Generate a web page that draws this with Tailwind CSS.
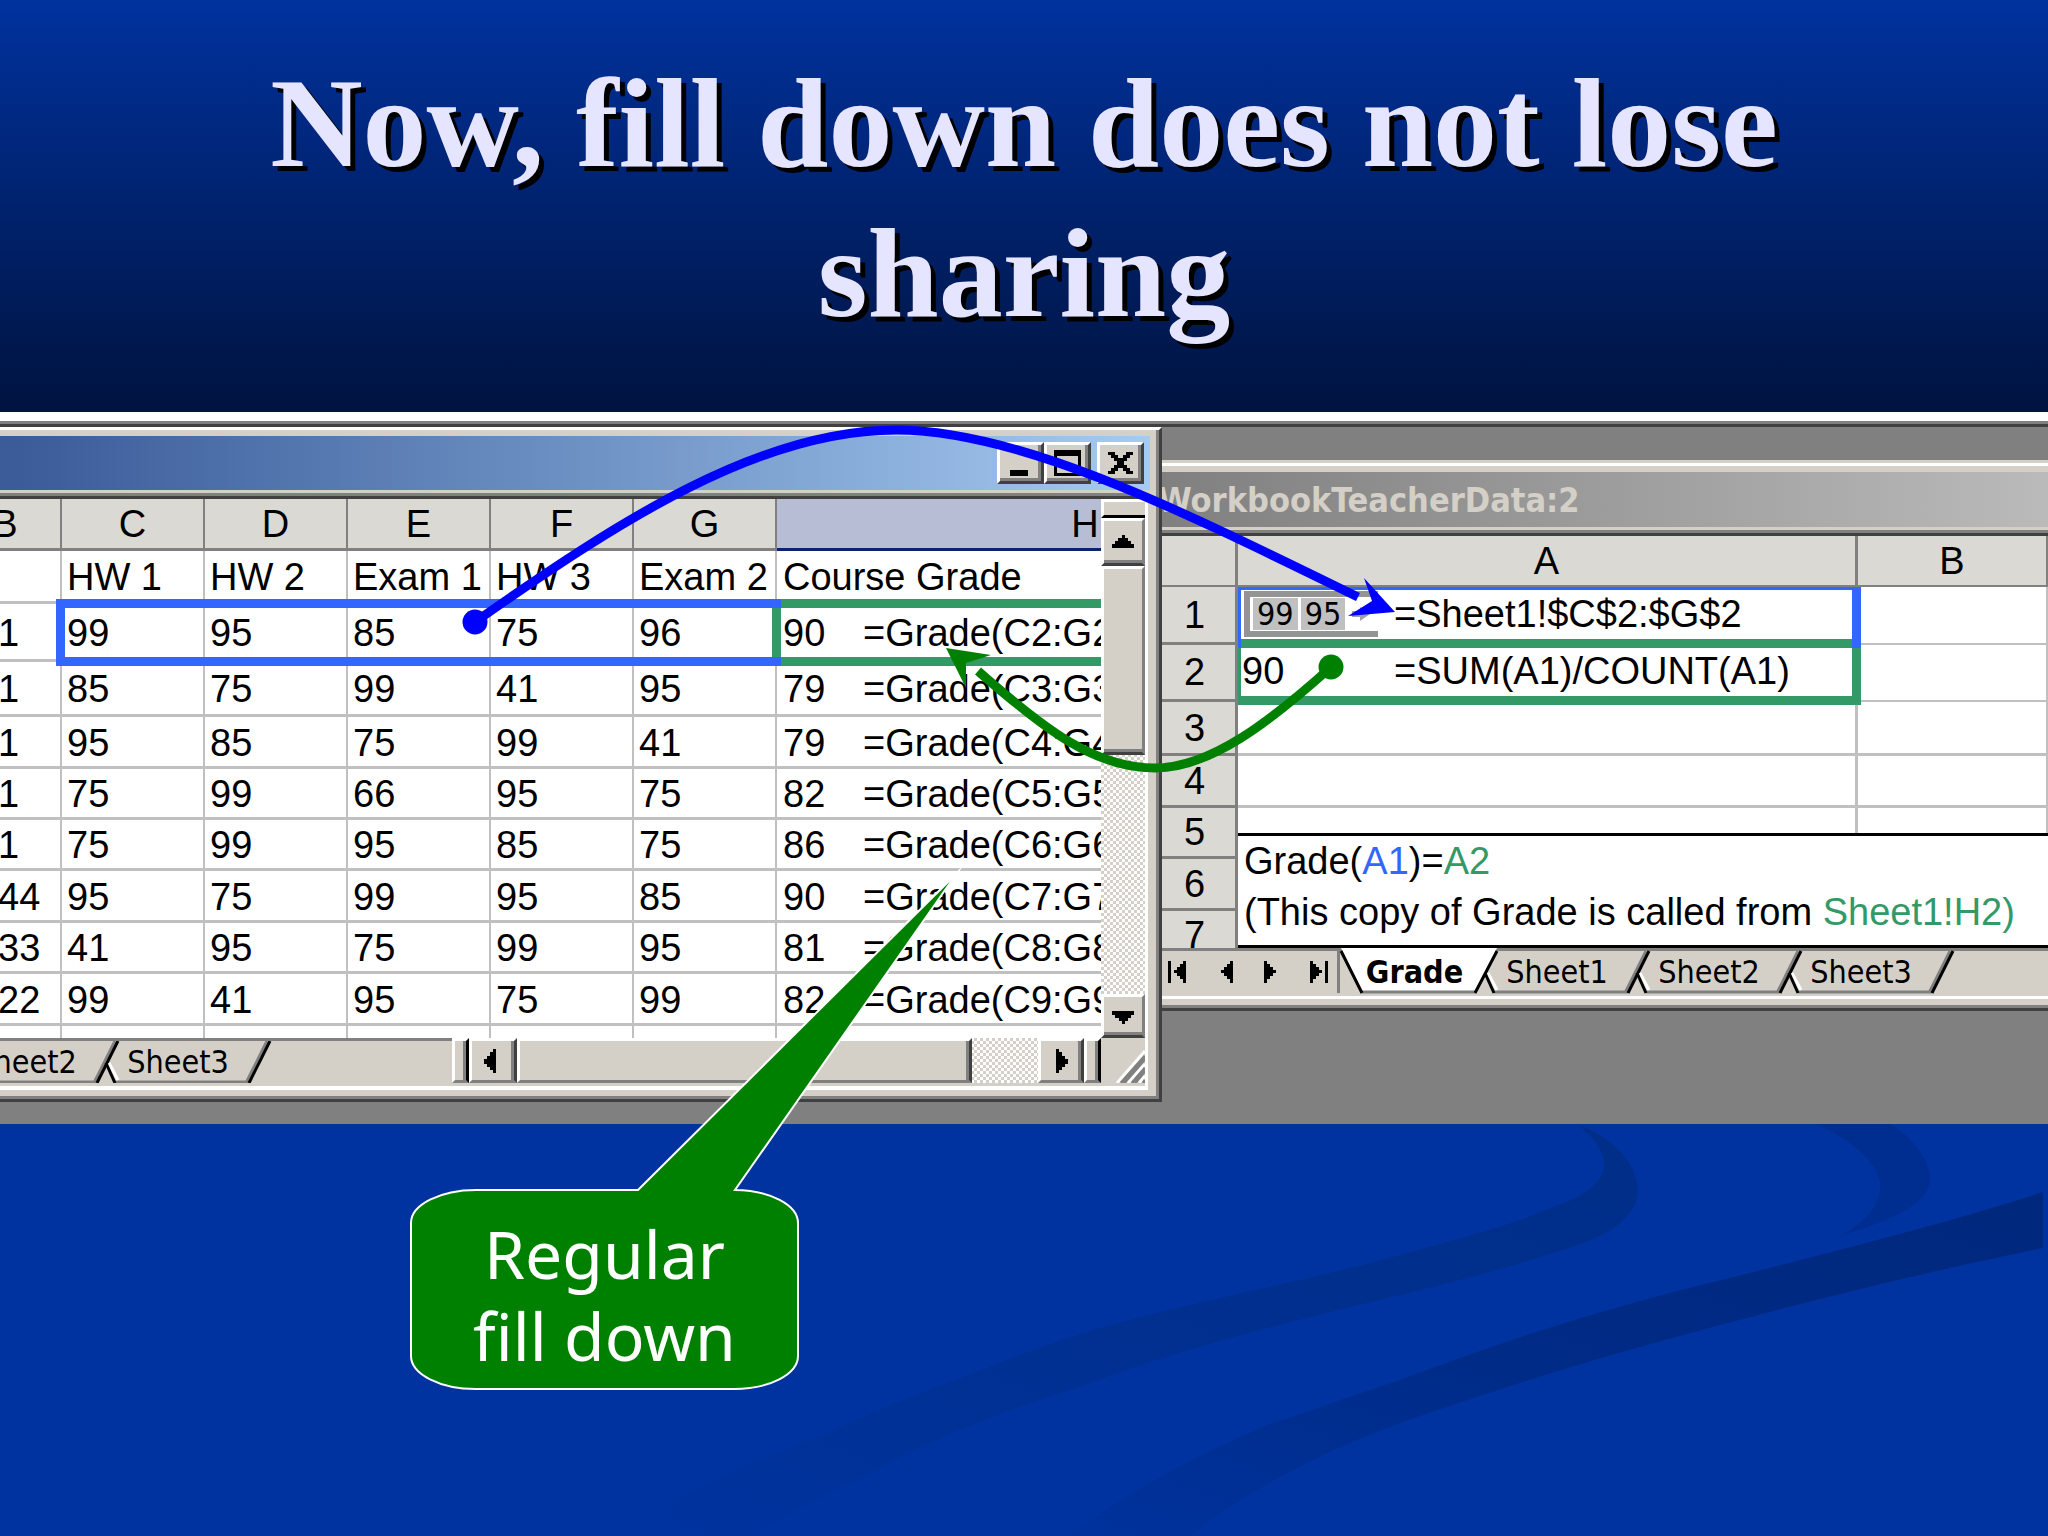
<!DOCTYPE html>
<html lang="en">

<head>
    <meta charset="UTF-8">
    <meta name="viewport" content="width=device-width, initial-scale=1.0">
    <title>Now, fill down does not lose sharing</title>
    <script src="https://cdn.jsdelivr.net/npm/@tailwindcss/browser@4"></script>
</head>

<body class="bg-[#0033a0]">
    <main class="relative min-h-screen overflow-hidden font-['Liberation_Sans',sans-serif] text-[38px] leading-none text-black">
        <!-- background swooshes -->
        <svg class="absolute inset-x-0 top-0 w-full" viewBox="0 0 2048 1536" aria-hidden="true">
            <defs>
                <linearGradient id="fade1" x1="1" y1="0" x2="0" y2="1">
                    <stop offset="0" stop-color="#002e88" />
                    <stop offset="0.6" stop-color="#003092" />
                    <stop offset="1" stop-color="#0033a0" />
                </linearGradient>
                <linearGradient id="fade2" x1="1" y1="0" x2="0" y2="1">
                    <stop offset="0" stop-color="#00287c" />
                    <stop offset="0.5" stop-color="#002b86" />
                    <stop offset="1" stop-color="#00329d" />
                </linearGradient>
            </defs>
            <path fill="url(#fade1)" d="M1577 1124C1614 1138 1638 1164 1638 1192C1636 1222 1600 1240 1550 1254C1500 1270 1450 1283 1400 1295C1290 1322 1180 1348 1085 1385C1000 1412 930 1440 875 1470C830 1492 790 1512 753 1536H625C680 1490 750 1463 819 1437C870 1412 925 1391 982 1370C1030 1350 1070 1337 1110 1325C1200 1300 1310 1280 1400 1255C1460 1238 1510 1226 1550 1208C1612 1188 1620 1158 1577 1124Z" />
            <path fill="#002e90" d="M1815 1124H1890C1912 1136 1930 1160 1930 1180C1928 1206 1890 1220 1840 1236C1866 1222 1880 1206 1880 1185C1880 1164 1850 1138 1815 1124Z" />
            <path fill="url(#fade2)" d="M2043 1192V1248C1900 1277 1770 1311 1640 1347C1550 1372 1480 1396 1400 1423C1330 1449 1260 1482 1190 1536H1070C1120 1496 1190 1458 1270 1424C1320 1408 1350 1396 1400 1380C1510 1338 1620 1304 1730 1278C1840 1250 1950 1222 2043 1192Z" />
        </svg>

        <header class="relative bg-linear-to-b from-[#00329f] to-[#001340] pt-12 pb-16">
            <h1 class="mx-auto max-w-[1700px] text-center font-['Liberation_Serif',serif] text-[128px] leading-[150px] font-bold text-[#e5e5ff] [text-shadow:5px_5px_0_#000]">
                Now, fill down does not lose sharing
            </h1>
        </header>

        <div class="relative border-t-9 border-white">
            <div class="h-[3px] bg-[#808080]"></div>
            <div class="h-[3px] bg-[#404040]"></div>
            <div class="grid grid-cols-[1162fr_886fr] items-start bg-[#808080] pb-[22px]">

                <!-- Sheet1 window -->
                <section class="min-w-0 border-t-3 border-r-3 border-b-3 border-t-white border-r-[#404040] border-b-[#404040]">
                    <div class="border-r-3 border-b-3 border-[#808080] bg-[#d4d0c8] py-[6px] pr-[6px]">
                        <div class="flex h-[54px] items-center justify-end bg-linear-to-r from-[#3a5a98] to-[#a6caf0] pr-[6px]">
                            <button aria-label="Minimize" class="flex h-[42px] w-[47px] items-center justify-center border-3 border-t-white border-r-[#404040] border-b-[#404040] border-l-white bg-[#d4d0c8] shadow-[inset_-3px_-3px_0_#808080]">
                                <svg class="h-8 w-8" viewBox="0 0 32 32"><path d="M5 23h18v6H5z" /></svg>
                            </button>
                            <button aria-label="Maximize" class="mr-[6px] flex h-[42px] w-[47px] items-center justify-center border-3 border-t-white border-r-[#404040] border-b-[#404040] border-l-white bg-[#d4d0c8] shadow-[inset_-3px_-3px_0_#808080]">
                                <svg class="h-8 w-8" viewBox="0 0 32 32"><path fill-rule="evenodd" d="M2 3h27v26H2zM5 9v17h21V9z" /></svg>
                            </button>
                            <button aria-label="Close" class="flex h-[42px] w-[47px] items-center justify-center border-3 border-t-white border-r-[#404040] border-b-[#404040] border-l-white bg-[#d4d0c8] shadow-[inset_-3px_-3px_0_#808080]">
                                <svg class="h-8 w-8" viewBox="0 0 32 32"><path d="M3 5h7v3h3v3h5V8h3V5h7v3h-3v3h-3v3h-3v4h3v3h3v3h3v3h-7v-3h-3v-3h-5v3h-3v3H3v-3h3v-3h3v-3h3v-4H9v-3H6V8H3z" /></svg>
                            </button>
                        </div>
                        <div class="mt-[3px] mr-[2px] border-t-3 border-r-3 border-b-4 border-t-[#808080] border-r-white border-b-white bg-[#d4d0c8] pb-[3px]">
                            <div class="flex border-t-3 border-[#404040]">
                                <div class="relative h-[539px] min-w-0 flex-1 overflow-hidden bg-white">
                                    <table class="-ml-[50px] w-[1445px] table-fixed border-separate border-spacing-0 text-left">
                                        <colgroup>
                                            <col class="w-[112px]">
                                            <col class="w-[143px]">
                                            <col class="w-[143px]">
                                            <col class="w-[143px]">
                                            <col class="w-[143px]">
                                            <col class="w-[143px]">
                                            <col>
                                        </colgroup>
                                        <thead>
                                            <tr class="h-[52px] text-center">
                                                <th class="border-r-2 border-b-3 border-[#808080] bg-[#dbd9d3] font-normal">B</th>
                                                <th class="border-r-2 border-b-3 border-[#808080] bg-[#dbd9d3] font-normal">C</th>
                                                <th class="border-r-2 border-b-3 border-[#808080] bg-[#dbd9d3] font-normal">D</th>
                                                <th class="border-r-2 border-b-3 border-[#808080] bg-[#dbd9d3] font-normal">E</th>
                                                <th class="border-r-2 border-b-3 border-[#808080] bg-[#dbd9d3] font-normal">F</th>
                                                <th class="border-r-2 border-b-3 border-[#808080] bg-[#dbd9d3] font-normal">G</th>
                                                <th class="border-r-2 border-b-3 border-[#0a246a] bg-[#b8bdd6] font-normal">H</th>
                                            </tr>
                                        </thead>
                                        <tbody id="grades"></tbody>
                                    </table>
                                    <div class="absolute top-[100px] right-0 left-[772px] h-[67px] border-y-9 border-l-9 border-[#339966]"></div>
                                    <div class="absolute top-[100px] left-[56px] h-[67px] w-[725px] border-y-9 border-l-9 border-[#3366ff]"></div>
                                </div>
                                <!-- vertical scroll bar -->
                                <div class="flex w-[44px] flex-col bg-[repeating-conic-gradient(#fff_0_25%,#d4d0c8_0_50%)] bg-[length:6px_6px]">
                                    <div class="h-[19px] border-t-3 border-b-3 border-l-3 border-t-white border-b-black border-l-white bg-[#d4d0c8]"></div>
                                    <button aria-label="Scroll up" class="flex h-[48px] items-center justify-center border-3 border-t-white border-r-[#808080] border-b-[#404040] border-l-white bg-[#d4d0c8] shadow-[inset_0_-3px_0_#808080]">
                                        <svg class="h-6 w-6" viewBox="0 0 24 24"><path d="M11 5h3v3h3v3h3v3h3v4H1v-4h3v-3h3V8h4z" /></svg>
                                    </button>
                                    <div class="h-[189px] border-3 border-t-white border-r-[#808080] border-b-[#404040] border-l-white bg-[#d4d0c8] shadow-[inset_0_-3px_0_#808080]"></div>
                                    <button aria-label="Scroll down" class="mt-auto flex h-[44px] items-center justify-center border-3 border-t-white border-r-[#808080] border-b-[#404040] border-l-white bg-[#d4d0c8] shadow-[inset_0_-3px_0_#808080]">
                                        <svg class="h-6 w-6" viewBox="0 0 24 24"><path d="M1 7h22v4h-3v3h-3v3h-3v3h-3v-3H8v-3H4v-3H1z" /></svg>
                                    </button>
                                </div>
                            </div>
                            <div class="flex h-[45px]">
                                <div class="w-[452px] overflow-hidden border-t-3 border-[#808080]">
                                    <div class="-ml-[34px] flex font-['DejaVu_Sans_Condensed','DejaVu_Sans',sans-serif] text-[32px]">
                                        <button class="relative h-[42px] w-[152px] pr-8">
                                            <svg class="absolute inset-0 h-full w-full overflow-visible" viewBox="0 0 152 42" fill="none"><path d="M-3 41H131" stroke="#808080" stroke-width="3" /><path d="M128 42l21-42" stroke="#808080" stroke-width="3" /><path d="M131 42L152 0" stroke="#000" stroke-width="3" /></svg>
                                            <span class="relative">Sheet2</span>
                                        </button>
                                        <button class="relative h-[42px] w-[152px] pr-8">
                                            <svg class="absolute inset-0 h-full w-full overflow-visible" viewBox="0 0 152 42" fill="none"><path d="M-3 41H131" stroke="#808080" stroke-width="3" /><path d="M-9 22l9 17" stroke="#fff" stroke-width="3" /><path d="M-12 22L-3 42" stroke="#000" stroke-width="3" /><path d="M128 42l21-42" stroke="#808080" stroke-width="3" /><path d="M131 42L152 0" stroke="#000" stroke-width="3" /></svg>
                                            <span class="relative">Sheet3</span>
                                        </button>
                                    </div>
                                </div>
                                <!-- horizontal scroll bar -->
                                <div class="flex min-w-0 flex-1 bg-[repeating-conic-gradient(#fff_0_25%,#d4d0c8_0_50%)] bg-[length:6px_6px]">
                                    <div class="w-[17px] border-3 border-t-white border-r-black border-b-[#808080] border-l-white bg-[#d4d0c8] shadow-[inset_-3px_0_0_#808080]"></div>
                                    <button aria-label="Scroll left" class="flex w-[48px] items-center justify-center border-3 border-t-white border-r-[#404040] border-b-[#808080] border-l-white bg-[#d4d0c8] shadow-[inset_-3px_0_0_#808080]">
                                        <svg class="h-6 w-6" viewBox="0 0 24 24"><path d="M15 0v24h-3v-3H9v-3H6v-3H3V10h3V7h3V3h3V0z" /></svg>
                                    </button>
                                    <div class="w-[455px] border-3 border-t-white border-r-[#404040] border-b-[#808080] border-l-white bg-[#d4d0c8] shadow-[inset_-3px_0_0_#808080]"></div>
                                    <button aria-label="Scroll right" class="ml-auto flex w-[46px] items-center justify-center border-3 border-t-white border-r-[#404040] border-b-[#808080] border-l-white bg-[#d4d0c8] shadow-[inset_-3px_0_0_#808080]">
                                        <svg class="h-6 w-6" viewBox="0 0 24 24"><path d="M7 0v24h3v-3h3v-3h3v-3h3V10h-3V7h-3V3h-3V0z" /></svg>
                                    </button>
                                    <div class="w-[17px] border-3 border-t-white border-r-black border-b-[#808080] border-l-white bg-[#d4d0c8] shadow-[inset_-3px_0_0_#808080]"></div>
                                </div>
                                <div class="flex w-[44px] items-end justify-end">
                                    <svg class="h-9 w-9" viewBox="0 0 36 36" stroke-width="3"><path stroke="#fff" d="M8 36L36 4M19 36L36 17M30 36L36 29" /><path stroke="#808080" d="M12 36L36 9M15 36L36 12M23 36L36 21M26 36L36 24M34 36L36 33" /></svg>
                                </div>
                            </div>
                        </div>
                    </div>
                </section>

                <!-- Grade window -->
                <section class="mt-[33px] min-w-0 border-t-3 border-b-3 border-t-[#d4d0c8] border-b-[#404040]">
                    <div class="border-t-3 border-b-3 border-t-white border-b-[#808080] bg-[#d4d0c8] py-[6px]">
                        <div class="flex h-[55px] items-center overflow-hidden bg-linear-to-r from-[#808080] to-[#bababa] font-['DejaVu_Sans_Condensed','DejaVu_Sans',sans-serif] text-[34px] font-bold text-[#d4d0c8]">
                            <h2 class="-ml-1">WorkbookTeacherData:2</h2>
                        </div>
                        <div class="mt-[3px] border-t-3 border-b-3 border-t-[#808080] border-b-white pb-[3px]">
                            <div class="relative h-[415px] overflow-hidden border-t-3 border-[#404040] bg-white">
                                <table class="w-full table-fixed border-separate border-spacing-0 text-left">
                                    <colgroup>
                                        <col class="w-[76px]">
                                        <col class="w-[620px]">
                                        <col>
                                    </colgroup>
                                    <thead>
                                        <tr class="h-[51px] text-center">
                                            <th class="border-r-3 border-b-2 border-[#808080] bg-[#dbd9d3]"></th>
                                            <th class="border-r-3 border-b-2 border-[#808080] bg-[#dbd9d3] font-normal">A</th>
                                            <th class="border-r-2 border-b-2 border-[#808080] bg-[#dbd9d3] font-normal">B</th>
                                        </tr>
                                    </thead>
                                    <tbody>
                                        <tr class="h-[58px]">
                                            <th class="border-r-3 border-b-3 border-[#808080] bg-[#dbd9d3] pr-2 text-center font-normal">1</th>
                                            <td class="border-r-3 border-b-2 border-[#c0c0c0] p-0 pb-[3px]">
                                                <div class="flex items-center pl-[6px]">
                                                    <div class="flex h-[46px] w-[134px] items-center gap-[3px] border-t-6 border-b-6 border-l-6 border-[#949494] pl-[3px] font-['DejaVu_Sans_Condensed','DejaVu_Sans',sans-serif] text-[32px]">
                                                        <span class="bg-[#c0c0c0] px-1">99</span>
                                                        <span class="bg-[#c0c0c0] px-1">95</span>
                                                        <svg class="h-4 w-6" viewBox="0 0 24 16" fill="#a0a0a0"><path d="M4 5h8V1l10 7-10 7v-4H4z" /></svg>
                                                    </div>
                                                    <span class="ml-[16px]">=Sheet1!$C$2:$G$2</span>
                                                </div>
                                            </td>
                                            <td class="border-r-2 border-b-2 border-[#c0c0c0]"></td>
                                        </tr>
                                        <tr class="h-[57px]">
                                            <th class="border-r-3 border-b-3 border-[#808080] bg-[#dbd9d3] pr-2 text-center font-normal">2</th>
                                            <td class="border-r-3 border-b-2 border-[#c0c0c0] p-0 pb-[3px]">
                                                <div class="flex pl-[4px]">
                                                    <span class="w-[152px]">90</span>
                                                    <span>=SUM(A1)/COUNT(A1)</span>
                                                </div>
                                            </td>
                                            <td class="border-r-2 border-b-2 border-[#c0c0c0]"></td>
                                        </tr>
                                        <tr class="h-[54px]">
                                            <th class="border-r-3 border-b-3 border-[#808080] bg-[#dbd9d3] pr-2 text-center font-normal">3</th>
                                            <td class="border-r-3 border-b-3 border-[#c0c0c0]"></td>
                                            <td class="border-r-2 border-b-3 border-[#c0c0c0]"></td>
                                        </tr>
                                        <tr class="h-[52px]">
                                            <th class="border-r-3 border-b-3 border-[#808080] bg-[#dbd9d3] pr-2 text-center font-normal">4</th>
                                            <td class="border-r-3 border-b-3 border-[#c0c0c0]"></td>
                                            <td class="border-r-2 border-b-3 border-[#c0c0c0]"></td>
                                        </tr>
                                        <tr class="h-[51px]">
                                            <th class="border-r-3 border-b-3 border-[#808080] bg-[#dbd9d3] pr-2 text-center font-normal">5</th>
                                            <td class="border-r-3 border-b-3 border-[#c0c0c0]"></td>
                                            <td class="border-r-2 border-b-3 border-[#c0c0c0]"></td>
                                        </tr>
                                        <tr class="h-[52px]">
                                            <th class="border-r-3 border-b-3 border-[#808080] bg-[#dbd9d3] pr-2 text-center font-normal">6</th>
                                            <td class="border-r-3 border-b-3 border-[#c0c0c0]"></td>
                                            <td class="border-r-2 border-b-3 border-[#c0c0c0]"></td>
                                        </tr>
                                        <tr class="h-[51px]">
                                            <th class="border-r-3 border-b-3 border-[#808080] bg-[#dbd9d3] pr-2 text-center font-normal">7</th>
                                            <td class="border-r-3 border-b-3 border-[#c0c0c0]"></td>
                                            <td class="border-r-2 border-b-3 border-[#c0c0c0]"></td>
                                        </tr>
                                    </tbody>
                                </table>
                                <div class="absolute top-[103px] left-[76px] h-[66px] w-[623px] border-t-9 border-r-9 border-b-9 border-l-3 border-[#339966]"></div>
                                <div class="absolute top-[51px] left-[76px] h-[61px] w-[623px] border-t-3 border-r-9 border-l-3 border-[#3366ff]"></div>
                                <div class="absolute right-0 bottom-0 left-[76px] border-y-3 border-black bg-white pb-[7px] pl-[6px] leading-[51px] whitespace-nowrap">
                                    <p>Grade(<span class="text-[#3366ff]">A1</span>)=<span class="text-[#339966]">A2</span></p>
                                    <p>(This copy of Grade is called from <span class="text-[#339966]">Sheet1!H2)</span></p>
                                </div>
                            </div>
                            <div class="flex h-[45px] border-t-3 border-[#808080]">
                                <div class="flex w-[178px] items-center border-r-3 border-[#808080]">
                                    <button aria-label="First sheet" class="flex w-[45px] justify-center pr-[15px]">
                                        <svg class="h-6 w-6" viewBox="0 0 24 24"><path d="M3 1h3v22H3zM21 1v22h-3v-4h-3v-3h-3v-3H9v-3h3V7h3V4h3V1z" /></svg>
                                    </button>
                                    <button aria-label="Previous sheet" class="flex w-[41px] justify-center">
                                        <svg class="h-6 w-6" viewBox="0 0 24 24"><path d="M17 1v22h-3v-4h-3v-3H8v-3H5v-3h3V7h3V4h3V1z" /></svg>
                                    </button>
                                    <button aria-label="Next sheet" class="flex w-[45px] justify-center">
                                        <svg class="h-6 w-6" viewBox="0 0 24 24"><path d="M5 1v22h3v-4h3v-3h3v-3h3v-3h-3V7h-3V4H8V1z" /></svg>
                                    </button>
                                    <button aria-label="Last sheet" class="flex w-[44px] justify-end pr-[6px]">
                                        <svg class="h-6 w-6" viewBox="0 0 24 24"><path d="M18 1h3v22h-3zM3 1v22h3v-4h3v-3h3v-3h3v-3h-3V7H9V4H6V1z" /></svg>
                                    </button>
                                </div>
                                <div class="flex font-['DejaVu_Sans_Condensed','DejaVu_Sans',sans-serif] text-[32px]">
                                    <button class="relative h-[42px] w-[157px] pr-2 font-bold">
                                        <svg class="absolute inset-0 h-full w-full overflow-visible" viewBox="0 0 157 42"><path d="M1-3L22 40H135L157-3Z" fill="#fff" /><path d="M22 41H135" stroke="#808080" stroke-width="3" /><path d="M1 0L22 42M135 42L157 0" stroke="#000" stroke-width="3" /></svg>
                                        <span class="relative">Grade</span>
                                    </button>
                                    <button class="relative h-[42px] w-[152px] pr-8">
                                        <svg class="absolute inset-0 h-full w-full overflow-visible" viewBox="0 0 152 42" fill="none"><path d="M-3 41H131" stroke="#808080" stroke-width="3" /><path d="M-9 22l9 17" stroke="#fff" stroke-width="3" /><path d="M-12 22L-3 42" stroke="#000" stroke-width="3" /><path d="M128 42l21-42" stroke="#808080" stroke-width="3" /><path d="M131 42L152 0" stroke="#000" stroke-width="3" /></svg>
                                        <span class="relative">Sheet1</span>
                                    </button>
                                    <button class="relative h-[42px] w-[152px] pr-8">
                                        <svg class="absolute inset-0 h-full w-full overflow-visible" viewBox="0 0 152 42" fill="none"><path d="M-3 41H131" stroke="#808080" stroke-width="3" /><path d="M-9 22l9 17" stroke="#fff" stroke-width="3" /><path d="M-12 22L-3 42" stroke="#000" stroke-width="3" /><path d="M128 42l21-42" stroke="#808080" stroke-width="3" /><path d="M131 42L152 0" stroke="#000" stroke-width="3" /></svg>
                                        <span class="relative">Sheet2</span>
                                    </button>
                                    <button class="relative h-[42px] w-[152px] pr-8">
                                        <svg class="absolute inset-0 h-full w-full overflow-visible" viewBox="0 0 152 42" fill="none"><path d="M-3 41H131" stroke="#808080" stroke-width="3" /><path d="M-9 22l9 17" stroke="#fff" stroke-width="3" /><path d="M-12 22L-3 42" stroke="#000" stroke-width="3" /><path d="M128 42l21-42" stroke="#808080" stroke-width="3" /><path d="M131 42L152 0" stroke="#000" stroke-width="3" /></svg>
                                        <span class="relative">Sheet3</span>
                                    </button>
                                </div>
                            </div>
                        </div>
                    </div>
                </section>
            </div>
        </div>

        <!-- arrows and callout drawn over both windows -->
        <svg class="pointer-events-none absolute inset-x-0 top-0 w-full" viewBox="0 0 2048 1536" fill="none" aria-hidden="true">
            <path d="M475 622C620 520 760 430 896 430C1020 430 1180 510 1358 597" stroke="#0000ff" stroke-width="9" />
            <circle cx="475" cy="622" r="12.5" fill="#0000ff" />
            <path d="M1395 612L1364 578L1372 601L1348 616Z" fill="#0000ff" />
            <path d="M1331 667C1270 722 1210 768 1155 768C1095 768 1045 730 978 671" stroke="#008000" stroke-width="9" />
            <circle cx="1331" cy="667" r="12.5" fill="#008000" />
            <path d="M946 648L991 655L966 663L966 688Z" fill="#008000" />
            <path d="M476 1190H638L957 873L735 1190A64 33 0 0 1 798 1223V1356A64 33 0 0 1 734 1389H476A65 33 0 0 1 411 1356V1223A65 33 0 0 1 476 1190Z" fill="#008000" stroke="#fff" stroke-width="2" stroke-miterlimit="20" />
        </svg>
        <p class="absolute top-[1212px] left-[411px] w-[387px] text-center font-['Noto_Sans',sans-serif] text-[66px] leading-[82px] text-white">
            Regular<br>fill down
        </p>
    </main>
</body>
<script>
    const rows = [
        { height: 'h-[53px]', cells: ['', 'HW 1', 'HW 2', 'Exam 1', 'HW 3', 'Exam 2', 'Course Grade'] },
        { height: 'h-[58px]', cells: ['1', '99', '95', '85', '75', '96', '90'], formula: '=Grade(C2:G2)' },
        { height: 'h-[55px]', cells: ['1', '85', '75', '99', '41', '95', '79'], formula: '=Grade(C3:G3)' },
        { height: 'h-[52px]', cells: ['1', '95', '85', '75', '99', '41', '79'], formula: '=Grade(C4:G4)' },
        { height: 'h-[51px]', cells: ['1', '75', '99', '66', '95', '75', '82'], formula: '=Grade(C5:G5)' },
        { height: 'h-[51px]', cells: ['1', '75', '99', '95', '85', '75', '86'], formula: '=Grade(C6:G6)' },
        { height: 'h-[52px]', cells: ['44', '95', '75', '99', '95', '85', '90'], formula: '=Grade(C7:G7)' },
        { height: 'h-[51px]', cells: ['33', '41', '95', '75', '99', '95', '81'], formula: '=Grade(C8:G8)' },
        { height: 'h-[52px]', cells: ['22', '99', '41', '95', '75', '99', '82'], formula: '=Grade(C9:G9)' },
        { height: 'h-[51px]', cells: ['', '', '', '', '', '', ''] },
    ];
    document.getElementById('grades').innerHTML = rows.map((row) => {
        const [id, ...rest] = row.cells;
        const last = rest.pop();
        const cells = rest.map((value) => `<td class="border-r-2 border-b-3 border-[#c0c0c0] p-0 pt-[2px] pl-[5px] whitespace-nowrap">${value}</td>`).join('');
        const end = row.formula
            ? `<div class="flex"><span class="w-[80px]">${last}</span><span>${row.formula}</span></div>`
            : last;
        return `
            <tr class="${row.height}">
                <td class="border-r-2 border-b-3 border-[#c0c0c0] p-0 pt-[2px] pl-[48px]">${id}</td>
                ${cells}
                <td class="border-r-2 border-b-3 border-[#c0c0c0] p-0 pt-[2px] pl-[6px] whitespace-nowrap">${end}</td>
            </tr>
        `
    }).join('');
</script>

</html>
